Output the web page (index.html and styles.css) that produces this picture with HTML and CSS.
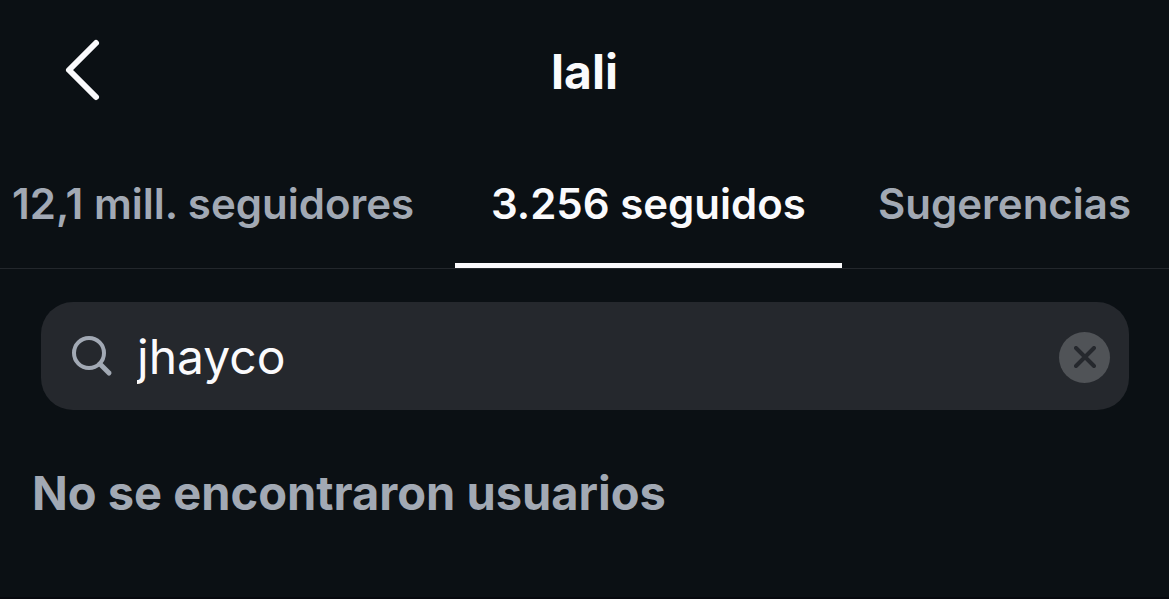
FILE: index.html
```html
<!DOCTYPE html>
<html lang="es">
<head>
    <meta charset="UTF-8">
    <meta name="viewport" content="width=device-width, initial-scale=1.0">
    <title>lali</title>
    <link rel="stylesheet" href="styles.css">
</head>
<body>

<!-- Header -->
<header class="header">
    <button type="button" class="back" aria-label="Atrás">
        <svg width="40" height="64" viewBox="0 0 40 64" fill="none" stroke="#fafafc" stroke-width="6" stroke-linecap="round" stroke-linejoin="round">
            <path d="M34 5 L7 32 L34 59"/>
        </svg>
    </button>
    <h1 class="title">lali</h1>
</header>

<!-- Tabs -->
<nav class="tabs">
    <a href="#seguidores" class="tab">12,1 mill. seguidores</a>
    <a href="#seguidos" class="tab active">3.256 seguidos</a>
    <a href="#sugerencias" class="tab">Sugerencias</a>
</nav>

<!-- Search -->
<main class="content" id="seguidos">
    <form class="search">
        <label for="search" class="search-icon" aria-label="Buscar">
            <svg width="42" height="42" viewBox="0 0 42 42" fill="none" stroke="#a2a9b4" stroke-linecap="round">
                <circle cx="18" cy="18" r="15" stroke-width="4"/>
                <path d="M29 29 L38 38" stroke-width="5"/>
            </svg>
        </label>
        <input type="text" id="search" name="search" value="jhayco">
        <button type="reset" class="clear" aria-label="Borrar">
            <svg width="22" height="22" viewBox="0 0 22 22" fill="none" stroke="#25282d" stroke-width="4" stroke-linecap="round">
                <path d="M2 2 L20 20 M20 2 L2 20"/>
            </svg>
        </button>
    </form>

    <h2 class="empty">No se encontraron usuarios</h2>
</main>

</body>
</html>
```
FILE: styles.css
```css
* {
    box-sizing: border-box;
}
body {
    font-family: Inter, "Liberation Sans", sans-serif;
    background-color: #0b1014;
    color: #fafafc;
    min-height: 100vh;
    margin: 0;
    border-bottom: 2px solid #07090e;
}
button {
    padding: 0;
    border: none;
    background: none;
    cursor: pointer;
}
svg {
    display: block;
}
.header {
    display: grid;
    grid-template-columns: 1fr auto 1fr;
    align-items: center;
    height: 140px;
    padding: 0 62px;
}
.back {
    justify-self: start;
}
.title {
    margin: 0;
    padding-top: 4px;
    font-size: 48px;
    line-height: 60px;
    font-weight: 700;
}
.tabs {
    display: flex;
    gap: 36px;
    height: 129px;
    padding: 0 38px 0 12px;
    border-bottom: 1px solid #23272c;
}
.tab {
    display: flex;
    align-items: center;
    padding-top: 4px;
    border-bottom: 5px solid transparent;
    color: #a2a9b4;
    font-size: 42px;
    font-weight: 600;
    text-decoration: none;
    white-space: nowrap;
}
.tab:first-child {
    flex: 1;
}
.active {
    padding: 4px 36px 0;
    color: #fafafc;
    border-color: #fafafc;
}
.content {
    padding: 33px 32px 0;
}
.search {
    display: flex;
    align-items: center;
    height: 108px;
    margin: 0 8px 0 9px;
    padding: 0 19px 0 30px;
    border-radius: 32px;
    background-color: #25282d;
}
.search input {
    flex: 1;
    min-width: 0;
    padding: 0 24px;
    border: none;
    outline: none;
    background: none;
    color: #fafafc;
    font-family: inherit;
    font-size: 48px;
}
.clear {
    display: grid;
    place-items: center;
    width: 51px;
    height: 51px;
    margin-top: 2px;
    border-radius: 50%;
    background-color: #505357;
}
.empty {
    margin: 53px 0 0;
    color: #a2a9b4;
    font-size: 47px;
    line-height: 60px;
    font-weight: 700;
}
```
